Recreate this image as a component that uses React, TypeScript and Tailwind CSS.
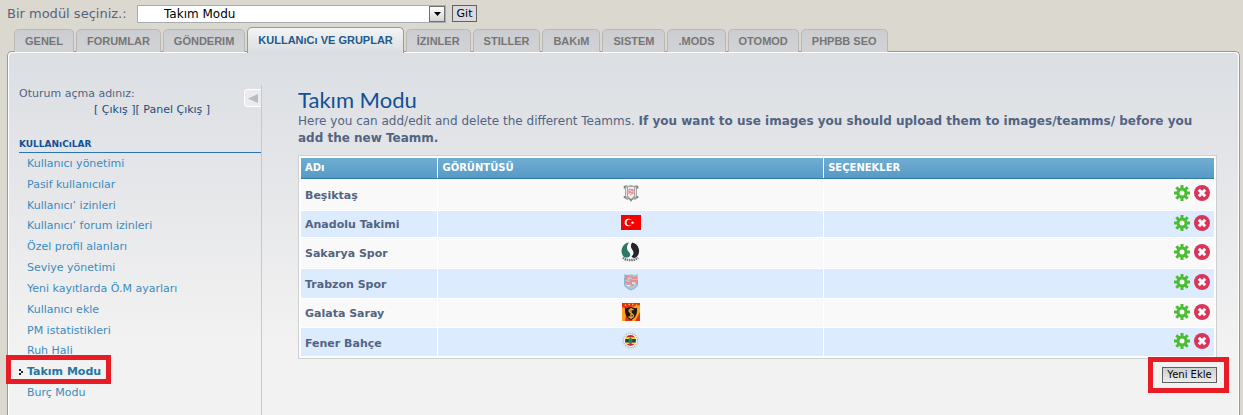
import React, { useState } from "react";
import clsx from "clsx";

interface Team {
  name: string;
  row: string;
  logo: React.ReactNode;
}

const tabs = [
  "GENEL",
  "FORUMLAR",
  "GÖNDERIM",
  "KULLANıCı VE GRUPLAR",
  "İZINLER",
  "STILLER",
  "BAKıM",
  "SISTEM",
  ".MODS",
  "OTOMOD",
  "PHPBB SEO"
];

const menu = [
  "Kullanıcı yönetimi",
  "Pasif kullanıcılar",
  "Kullanıcı’ izinleri",
  "Kullanıcı’ forum izinleri",
  "Özel profil alanları",
  "Seviye yönetimi",
  "Yeni kayıtlarda Ö.M ayarları",
  "Kullanıcı ekle",
  "PM istatistikleri",
  "Ruh Hali",
  "Takım Modu",
  "Burç Modu"
];

const BesiktasLogo = () => (
  <svg width="16" height="18" viewBox="0 0 16 18">
    <path d="M1 2l2-1 2 1 3-1 3 1 2-1 2 1-1 2v9l1 1-3 2-2-1-2 3-2-3-2 1-3-2 1-1V4z" fill="#a6a6a6" />
    <path d="M3.500 3.500v9M12.500 3.500v9" stroke="#e8e8e8" strokeWidth="1" />
    <path d="M1.500 2v2.500M14.500 2v2.500M1.500 12v2M14.500 12v2" stroke="#7c7c7c" strokeWidth="1.500" />
    <path d="M5 3h6v9l-3 3-3-3z" fill="#f5eaea" />
    <path d="M6 5l4 1-4 2 4 1-3 2M6 5v5M10 5v5" stroke="#e8838a" strokeWidth="1" fill="none" />
    <path d="M6 14.500l2 2 2-2" stroke="#666" fill="none" />
  </svg>
);

const TurkeyFlag = () => (
  <svg width="20" height="15" viewBox="0 0 20 15">
    <path fill="#f80000" d="M0 0h20v15H0z" />
    <circle cx="7.500" cy="7.500" r="3.800" fill="#fff" />
    <circle cx="8.600" cy="7.500" r="3" fill="#f80000" />
    <path d="M11.500 6l.5 1.100 1.200.2-.9.700.2 1.200-1-.6-1.100.5.3-1.200-.8-.8 1.200-.1z" fill="#fff" />
  </svg>
);

const SakaryaLogo = () => (
  <svg width="19" height="20" viewBox="0 0 19 20">
    <circle cx="9.500" cy="9" r="8.500" fill="#fff" />
    <path d="M8 .6A8.500 8.500 0 0 0 3 15c2 1 5 .6 6-1 1-2-.6-3.500-2-5-1.500-2-1.500-5 1-8.400z" fill="#2c7767" />
    <path d="M11 .6A8.500 8.500 0 0 1 15 15.500c-2 .8-4 .3-4.500-1 2.500-2 2.500-4.500 1-6.500C9.500 5.500 9.500 3 11 .6z" fill="#25232b" />
    <path d="M2 15.500c3 3.500 12 3.500 15 0" fill="none" stroke="#77777a" strokeWidth="2.500" strokeDasharray="1.500 .7" />
  </svg>
);

const TrabzonLogo = () => (
  <svg width="16" height="18" viewBox="0 0 16 18">
    <path d="M1 1l4 1 3-1 3 1 4-1v10c0 3-3 5-7 6.500C4 16 1 14 1 11z" fill="#a9cbdc" />
    <path d="M2 3h4v2H3v2M8 3l2 2h3V3M10 8h4v3M2 9l3 1v2M6 6l3 2-2 2 3 3" fill="none" stroke="#e88d90" strokeWidth="2" />
    <path d="M1.500 5v6c0 2.500 3 4.500 6.500 5.800 3.500-1.300 6.500-3.300 6.500-5.800V8" fill="none" stroke="#78a5c0" strokeDasharray="1.500 1" />
    <path d="M6 4.500v2M9 10h3M4 12.500h3" stroke="#eef6fa" />
  </svg>
);

const GalataLogo = () => (
  <svg width="18" height="18" viewBox="0 0 18 18">
    <path fill="#e5301b" d="M0 0h18v18H0z" />
    <path d="M0 4l5 2-2 12H0zM9 4l9-2v7l-5 9h-3z" fill="#f7a51c" />
    <path d="M3 1.500l1 1.500M7 .8l.5 1.500M11 .8l-.5 1.500M15 1.500L14 3" stroke="#f8c832" strokeWidth="1.300" />
    <path d="M3 5c2 .5 4-.5 6-1 2 .5 4 1.500 6 1 .5 6-1.500 10-6 12-4.500-2-6.500-6-6-12z" fill="#251512" />
    <path d="M11.500 7C10 5.500 7 6 7 8s4.500 2 4.500 4.500-3 3-5 1M9 5v11" fill="none" stroke="#eba92c" strokeWidth="1.300" />
  </svg>
);

const FenerLogo = () => (
  <svg width="17" height="17" viewBox="0 0 17 17">
    <circle cx="8.500" cy="8.500" r="8.300" fill="#f3f4f4" stroke="#c9d0d5" strokeWidth=".5" />
    <circle cx="8.500" cy="8.500" r="7" fill="none" stroke="#9ba3ab" strokeWidth="1.200" strokeDasharray="1 1" />
    <circle cx="8.500" cy="8.500" r="5.500" fill="#f1d92e" />
    <path d="M4 5.300a5.500 5.500 0 0 1 9 0z" fill="#c92c36" />
    <path d="M3.200 7h10.600v3.500H3.200z" fill="#28366e" />
    <path d="M4.500 12a5.500 5.500 0 0 0 8 0z" fill="#c92c36" />
    <path d="M8.500 5l2 3-1 4h-2l-1-4z" fill="#218a49" />
  </svg>
);

const teams: Team[] = [
  { name: "Beşiktaş", row: "h-8", logo: <BesiktasLogo /> },
  { name: "Anadolu Takimi", row: "h-[27px]", logo: <TurkeyFlag /> },
  { name: "Sakarya Spor", row: "h-[31px]", logo: <SakaryaLogo /> },
  { name: "Trabzon Spor", row: "h-[30px]", logo: <TrabzonLogo /> },
  { name: "Galata Saray", row: "h-[29px]", logo: <GalataLogo /> },
  { name: "Fener Bahçe", row: "h-[29px]", logo: <FenerLogo /> }
];

const GearIcon = () => (
  <svg width="16" height="16" viewBox="0 0 16 16">
    <g stroke="#4bbd34" strokeWidth="3">
      <path d="M8 0v16M0 8h16M2.300 2.300l11.400 11.400M13.700 2.300L2.300 13.700" />
    </g>
    <circle cx="8" cy="8" r="5.500" fill="#4bbd34" />
    <circle cx="8" cy="8" r="2.500" fill="#f9f9f9" />
  </svg>
);

const DeleteIcon = () => (
  <svg width="16" height="16" viewBox="0 0 16 16">
    <circle cx="8" cy="8" r="8" fill="#d9355a" />
    <path d="M4.800 4.800l6.400 6.400M11.200 4.800l-6.400 6.400" stroke="#fff" strokeWidth="3" />
  </svg>
);

export default function App() {
  const [activeTab, setActiveTab] = useState("KULLANıCı VE GRUPLAR");
  const [activeItem, setActiveItem] = useState("Takım Modu");

  return (
    <div className="min-h-screen bg-[#dbd8d0] pt-1 pl-[7px] pr-[3px] flex flex-col overflow-hidden font-['DejaVu_Sans',Verdana,sans-serif] text-[11px] text-[#536482]">
      <form className="flex items-center h-[19px]" onSubmit={e => e.preventDefault()}>
        <label htmlFor="module" className="text-[13px] w-[130px] whitespace-nowrap">Bir modül seçiniz.:</label>
        <div className="relative w-[309px]">
          <select id="module" className="block appearance-none w-full h-[18px] pl-[26px] bg-white border border-[#a5acb2] text-black text-[12px] leading-4">
            <option>Takım Modu</option>
          </select>
          <span className="absolute right-px top-px w-4 h-4 border border-[#707070] bg-gradient-to-b from-white to-[#d4d4d4] flex items-center justify-center pointer-events-none">
            <svg width="7" height="4" viewBox="0 0 7 4"><path d="M0 0h7L3.500 4z" fill="#000" /></svg>
          </span>
        </div>
        <button className="ml-1.5 h-[17px] w-[25px] border border-[#606060] bg-[#dcdae0] text-black text-[11px] leading-[15px]">Git</button>
      </form>

      <nav className="flex items-end gap-0.5 pl-[7px] mt-1 relative z-10">
        {tabs.map(tab => (
          <a
            key={tab}
            href="#"
            onClick={() => setActiveTab(tab)}
            className={clsx(
              "px-2.5 rounded-t-[5px] border border-b-0 whitespace-nowrap font-['Liberation_Sans',Arial,sans-serif] text-[11px] font-bold",
              tab === activeTab
                ? "h-[26px] -mb-px leading-[25px] border-[#999] bg-gradient-to-b from-[#f2f3f4] to-[#dbdfe3] text-[#23598c]"
                : "h-[23px] leading-[23px] border-[#bab8b5] bg-gradient-to-b from-[#cbcdd0] to-[#d2d3d6] text-[#767676]"
            )}
          >
            {tab}
          </a>
        ))}
      </nav>

      <div className="flex-1 -mt-px border border-b-0 border-[#999] rounded-t-[5px] bg-white pt-px px-px flex">
        <div className="flex-1 flex rounded-t-[4px] bg-[#f2f2f2] bg-[linear-gradient(#dbdfe3,#e4e5e8_110px,#f2f2f2_290px)] pl-2.5 pr-[21px]">
          <aside className="w-[243px] shrink-0 mt-8 border-r border-[#c5c9ce]">
            <div className="flex justify-between h-[58px]">
              <div className="pt-px leading-4 whitespace-nowrap">
                <p>Oturum açma adınız:</p>
                <p className="pl-[75px] text-[#1d4d80]">
                  [ <a href="#">Çıkış</a> ][ <a href="#">Panel Çıkış</a> ]
                </p>
              </div>
              <button aria-label="Menüyü gizle" className="mt-1 w-[17px] h-[18px] border border-r-0 border-white rounded-l-sm bg-[#ececee] flex items-center justify-center">
                <svg width="10" height="9" viewBox="0 0 10 9"><path d="M10 0v9L0 4.500z" fill="#b8bbc0" /></svg>
              </button>
            </div>
            <h2 className="h-2.5 text-[9px] leading-[2px] font-bold text-[#115098] border-b border-b-[#2a75b0]">KULLANıCıLAR</h2>
            <ul className="flex flex-col h-[250px]">
              {menu.map(item => (
                <li key={item} className="relative flex-1 min-h-0 leading-[21px]">
                  <a
                    href="#"
                    onClick={() => setActiveItem(item)}
                    className={clsx("flex items-center", item === activeItem ? "font-bold text-[#2476a3]" : "pl-2 text-[#3a8cc0]")}
                  >
                    {item === activeItem && (
                      <svg width="4" height="6" viewBox="0 0 4 6" className="mr-1">
                        <path d="M0 0h2v2H0zM2 2h2v2H2zM0 4h2v2H0z" fill="#222" />
                      </svg>
                    )}
                    {item}
                  </a>
                  {item === "Takım Modu" && (
                    <span className="absolute -left-[13px] -top-1.5 w-[105px] h-[29px] border-[5px] border-[#e81c24] pointer-events-none" />
                  )}
                </li>
              ))}
            </ul>
          </aside>

          <main className="flex-1 min-w-0 pl-9 pt-8">
            <h1 className="mt-0.5 font-['Lato','Trebuchet_MS',sans-serif] text-[22px] leading-[26px] text-[#115098]">Takım Modu</h1>
            <p className="text-[12px] leading-[17px]">
              Here you can add/edit and delete the different Teamms. <strong>If you want to use images you should upload them to images/teamms/ before you add the new Teamm.</strong>
            </p>

            <div className="mt-2 p-0.5 bg-white border border-[#ccd0d4]">
              <table className="w-full table-fixed border-collapse">
                <colgroup>
                  <col className="w-[15%]" />
                  <col className="w-[42.250%]" />
                  <col />
                </colgroup>
                <thead>
                  <tr className="h-5 bg-gradient-to-b from-[#70aed3] to-[#569ac5] text-white text-[10px] text-left">
                    <th className="pl-1 border-b border-b-[#327aa5]">ADı</th>
                    <th className="pl-1 border-b border-b-[#327aa5] border-l border-l-white">GÖRÜNTÜSÜ</th>
                    <th className="pl-1 border-b border-b-[#327aa5] border-l border-l-white">SEÇENEKLER</th>
                  </tr>
                </thead>
                <tbody>
                  {teams.map(team => (
                    <tr key={team.name} className={clsx(team.row, "odd:bg-[#f9f9f9] even:bg-[#dcebfe] border-b border-white last:border-b-0")}>
                      <td className="pl-1 pt-1 font-bold">{team.name}</td>
                      <td className="border-l border-white pb-0.5">
                        <div className="flex justify-center">{team.logo}</div>
                      </td>
                      <td className="border-l border-white pr-1 pb-0.5">
                        <div className="flex justify-end gap-1">
                          <a href="#" aria-label="Düzenle"><GearIcon /></a>
                          <a href="#" aria-label="Sil"><DeleteIcon /></a>
                        </div>
                      </td>
                    </tr>
                  ))}
                </tbody>
              </table>
            </div>

            <div className="flex justify-end mt-2">
              <div className="relative">
                <button className="block w-[55px] h-4 border border-[#606060] bg-gradient-to-b from-[#cfcfcf] to-[#ececec] text-black text-[10px] leading-[14px] whitespace-nowrap">Yeni Ekle</button>
                <span className="absolute -left-[14px] -top-2.5 w-[81px] h-9 border-[5px] border-[#e81c24] pointer-events-none" />
              </div>
            </div>
          </main>
        </div>
      </div>
    </div>
  );
}
